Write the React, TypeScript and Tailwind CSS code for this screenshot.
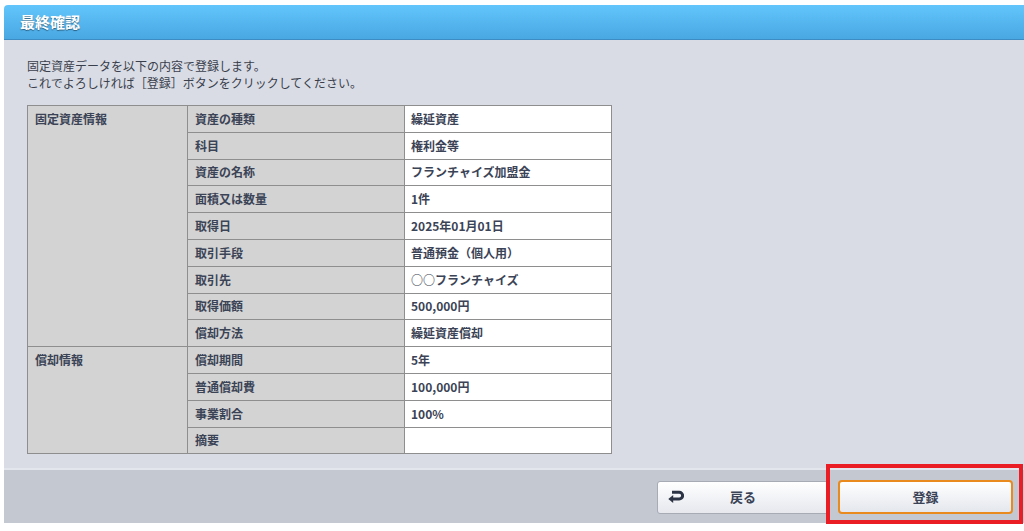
const font = { fontFamily: '"Noto Sans CJK JP", "Noto Sans", sans-serif' }

interface Row {
  group?: string
  span?: number
  label: string
  value: string
}

const rows: Row[] = [
  { group: '固定資産情報', span: 9, label: '資産の種類', value: '繰延資産' },
  { label: '科目', value: '権利金等' },
  { label: '資産の名称', value: 'フランチャイズ加盟金' },
  { label: '面積又は数量', value: '1件' },
  { label: '取得日', value: '2025年01月01日' },
  { label: '取引手段', value: '普通預金（個人用）' },
  { label: '取引先', value: '○○フランチャイズ' },
  { label: '取得価額', value: '500,000円' },
  { label: '償却方法', value: '繰延資産償却' },
  { group: '償却情報', span: 4, label: '償却期間', value: '5年' },
  { label: '普通償却費', value: '100,000円' },
  { label: '事業割合', value: '100%' },
  { label: '摘要', value: '' },
]

function ReturnIcon() {
  return (
    <svg width="16" height="14" viewBox="0 0 16 14" className="text-[#2c3344]">
      <path
        d="M4 2.2h7.2a3.4 3.4 0 0 1 0 6.8H4"
        fill="none"
        stroke="currentColor"
        strokeWidth="3"
      />
      <path d="M0.3 9 5.2 5v8z" fill="currentColor" />
    </svg>
  )
}

export default function App() {
  return (
    <div className="w-[1024px] h-[531px] bg-white overflow-hidden relative" style={font}>
      <div className="ml-[4px] mt-[5px] w-[1020px] flex flex-col">
        {/* Header */}
        <div className="h-[35px] rounded-tl-[4px] bg-gradient-to-b from-[#62c6fc] to-[#49a7e2] border-b border-[#3d8cc4] flex items-center pl-[16px]">
          <span className="text-white text-[15px] font-bold [text-shadow:0_1px_1px_rgba(0,0,0,0.45)]">最終確認</span>
        </div>

        {/* Body */}
        <div className="h-[428px] bg-[#d9dce5] pt-[17px] pl-[23px]">
          <p className="text-[12px] leading-[17px] text-[#3a3f4c]">固定資産データを以下の内容で登録します。</p>
          <p className="text-[12px] leading-[17px] text-[#3a3f4c]">これでよろしければ［登録］ボタンをクリックしてください。</p>

          <table className="mt-[14px] border-collapse w-[584px] table-fixed text-[12px] font-semibold text-[#3b4356]">
            <colgroup>
              <col className="w-[160px]" />
              <col className="w-[217px]" />
              <col className="w-[207px]" />
            </colgroup>
            <tbody>
              {rows.map((r) => (
                <tr key={r.label} className="h-[26.8px]">
                  {r.group && (
                    <td rowSpan={r.span} className="align-top border border-[#8e8e8e] bg-[#d3d3d3] px-[7px] pt-[4px]">
                      {r.group}
                    </td>
                  )}
                  <td className="border border-[#8e8e8e] bg-[#d3d3d3] px-[7px] py-0">{r.label}</td>
                  <td className="border border-[#8e8e8e] bg-white px-[6px] py-0">{r.value}</td>
                </tr>
              ))}
            </tbody>
          </table>
        </div>

        {/* Footer */}
        <div className="h-[55px] bg-[#c4c8d1] border-t-2 border-[#e3e6ec] flex items-center justify-end gap-[9px] pr-[11px] pt-[1px]">
          <button className="w-[172px] h-[33px] rounded-[3px] border border-[#a7abb4] bg-gradient-to-b from-white to-[#e6e8ee] flex items-center px-[10px] text-[13px] font-semibold text-[#3b4356]">
            <ReturnIcon />
            <span className="flex-1 text-center pr-[16px]">戻る</span>
          </button>
          <button className="w-[175px] h-[34px] rounded-[4px] border-2 border-[#e88a1e] bg-gradient-to-b from-white to-[#e4e7ed] text-[13px] font-semibold text-[#3b4356]">
            登録
          </button>
        </div>
      </div>

      {/* annotation */}
      <div className="absolute left-[826px] top-[464px] w-[197px] h-[60px] border-4 border-[#ea1c24] pointer-events-none" />
    </div>
  )
}
